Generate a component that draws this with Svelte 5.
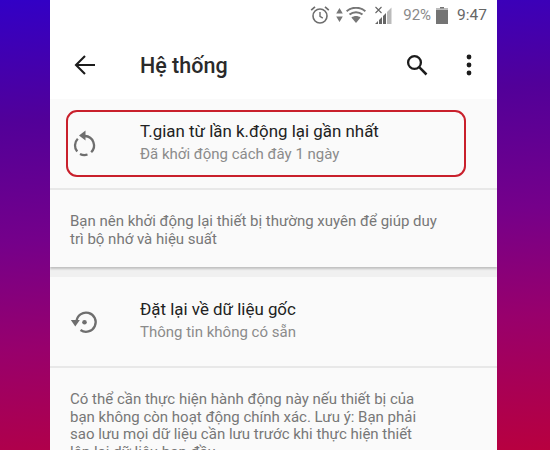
<script lang="ts">
  // Android "Hệ thống" settings page shown on a gradient backdrop
  const restartNote = "Bạn nên khởi động lại thiết bị thường xuyên để giúp duy trì bộ nhớ và hiệu suất";
  const resetNote =
    "Có thể cần thực hiện hành động này nếu thiết bị của bạn không còn hoạt động chính xác. Lưu ý: Bạn phải sao lưu mọi dữ liệu cần lưu trước khi thực hiện thiết lập\u00a0lại dữ liệu ban đầu.";
</script>

<div class="backdrop">
  <main class="phone">
    <header class="appbar">
      <div class="status">
        <svg class="alarm" viewBox="0 0 20 20" width="20" height="20" aria-hidden="true">
          <circle cx="10" cy="11" r="7" fill="none" stroke="#6d6d6d" stroke-width="1.6" />
          <path d="M10 7v4.400l2.800 1.700" fill="none" stroke="#6d6d6d" stroke-width="1.400" />
          <path d="M1.200 5.200 5 1.900M18.800 5.200 15 1.900" fill="none" stroke="#6d6d6d" stroke-width="1.700" />
        </svg>
        <svg class="updown" viewBox="0 0 7 14" width="7" height="14" aria-hidden="true">
          <path d="M3.500 0 6.800 5.600H.2zM3.500 14 .2 8.400h6.600z" fill="#777" />
        </svg>
        <svg class="wifi" viewBox="0 0 20 16" width="20" height="16" aria-hidden="true">
          <path d="M.6 4.200c5.400-4.600 13.400-4.600 18.800 0" fill="none" stroke="#777" stroke-width="2" />
          <path d="M3.500 7.600c3.800-3.200 9.200-3.200 13 0" fill="none" stroke="#777" stroke-width="2" />
          <path d="M10 16 5.400 10.400c2.800-2 6.400-2 9.200 0z" fill="#777" />
        </svg>
        <svg class="signal" viewBox="0 0 17 18" width="17" height="18" aria-hidden="true">
          <path d="M.5 1 6.500 7M6.500 1 .5 7" stroke="#666" stroke-width="1.100" fill="none" />
          <path d="M0 18 3 15V18zM4 18V14L7 11V18zM8 18V10L11 7V18z" fill="#666" />
          <path d="M12 18V6L16.500 1.500V18z" fill="#bbb" />
        </svg>
        <span class="percent">92%</span>
        <svg class="battery" viewBox="0 0 12 17" width="12" height="17" aria-hidden="true">
          <path d="M4 0h4v1.500h4V17H0V1.500h4z" fill="#747474" />
          <rect y="1.500" width="12" height="1.500" fill="#bdbdbd" />
        </svg>
        <span class="clock">9:47</span>
      </div>
      <div class="toolbar">
        <svg class="back" viewBox="0 0 24 24" width="24" height="24" aria-hidden="true">
          <path d="M22 12H3.600M12 3 3 12l9 9" fill="none" stroke="#1c1c1c" stroke-width="2.100" />
        </svg>
        <h1>Hệ thống</h1>
        <svg class="search" viewBox="0 0 24 24" width="24" height="24" aria-hidden="true">
          <circle cx="9.500" cy="9.500" r="6.400" fill="none" stroke="#1c1c1c" stroke-width="2.300" />
          <path d="m14.200 14.200 7.300 7.300" stroke="#1c1c1c" stroke-width="2.500" />
        </svg>
        <svg class="more" viewBox="0 0 6 22" width="6" height="22" aria-hidden="true">
          <circle cx="3" cy="3" r="2.400" fill="#1c1c1c" />
          <circle cx="3" cy="11" r="2.400" fill="#1c1c1c" />
          <circle cx="3" cy="19" r="2.400" fill="#1c1c1c" />
        </svg>
      </div>
    </header>

    <section class="card first">
      <div class="row">
        <svg class="row-icon" viewBox="0 0 30 30" width="30" height="30" aria-hidden="true">
          <path
            d="M15 6A9.500 9.500 0 0 1 21.200 22.200M17.500 24.500A9.500 9.500 0 0 1 10 23.900M7.200 21.600A9.500 9.500 0 0 1 7.800 8.800"
            fill="none"
            stroke="#6e6e6e"
            stroke-width="2.300"
          />
          <path d="M15.500 .5V10.500L9 5.500z" fill="#6e6e6e" />
        </svg>
        <div class="row-text">
          <div class="title">T.gian từ lần k.động lại gần nhất</div>
          <div class="sub">Đã khởi động cách đây 1 ngày</div>
        </div>
      </div>
      <div class="divider"></div>
      <p class="note">{restartNote}</p>
      <div class="highlight"></div>
    </section>

    <div class="gap"></div>

    <section class="card">
      <div class="row reset">
        <svg class="row-icon" viewBox="0 0 30 30" width="30" height="30" aria-hidden="true">
          <path d="M6.500 14.500A9.600 9.600 0 1 1 10.500 23" fill="none" stroke="#6e6e6e" stroke-width="2.300" />
          <path d="M.8 13H9.800L5.300 19.500z" fill="#6e6e6e" />
          <circle cx="14.500" cy="15.200" r="2.300" fill="#6e6e6e" />
        </svg>
        <div class="row-text">
          <div class="title">Đặt lại về dữ liệu gốc</div>
          <div class="sub">Thông tin không có sẵn</div>
        </div>
      </div>
      <div class="divider"></div>
      <p class="note">{resetNote}</p>
    </section>
  </main>
</div>

<style>
  :global(body) {
    margin: 0;
  }
  .backdrop {
    display: flex;
    justify-content: center;
    box-sizing: border-box;
    width: 550px;
    height: 450px;
    overflow: hidden;
    padding-right: 3px;
    background: linear-gradient(176deg, #3200c6 0%, #520099 25%, #75008a 50%, #98006c 72%, #b8003f 100%);
    font-family: Roboto, "Noto Sans", sans-serif;
  }
  .phone {
    width: 447px;
    height: 450px;
    overflow: hidden;
    background: #fafafa;
  }
  .appbar {
    position: relative;
    height: 99px;
    background: #fff;
    box-shadow: 0 1px 2px rgba(0, 0, 0, 0.25);
  }
  .status {
    display: flex;
    justify-content: flex-end;
    align-items: center;
    height: 30px;
    padding-right: 10px;
    color: #6f6f6f;
  }
  .alarm {
    margin-right: 6px;
  }
  .updown {
    margin-right: 3px;
  }
  .wifi {
    margin-right: 9px;
  }
  .signal {
    margin-right: 11px;
  }
  .percent {
    margin-right: 5px;
    font-size: 15px;
    color: #8a8a8a;
  }
  .battery {
    margin-right: 9px;
  }
  .clock {
    font-size: 15.500px;
    color: #666;
  }
  .toolbar {
    display: flex;
    align-items: center;
    height: 69px;
    padding-right: 25px;
    padding-left: 23px;
  }
  .toolbar h1 {
    flex: 1;
    margin: 2px 0 0 43px;
    font-size: 21.500px;
    font-weight: 500;
    color: #2a2a2a;
  }
  .search {
    margin-right: 37px;
  }
  .card {
    position: relative;
    background: #fafafa;
  }
  .first {
    height: 168px;
    box-sizing: border-box;
    padding-top: 3px;
    box-shadow: 0 1.500px 2px rgba(0, 0, 0, 0.2);
  }
  .row {
    display: flex;
    align-items: center;
    height: 86px;
    padding-left: 20px;
  }
  .row.reset {
    height: 89px;
  }
  .row-icon {
    margin-right: 40px;
  }
  .row-text {
    margin-bottom: 4px;
  }
  .reset .row-text {
    margin-bottom: 1px;
  }
  .title {
    font-size: 16.900px;
    line-height: 23px;
    color: #222;
  }
  .sub {
    font-size: 15px;
    line-height: 23px;
    color: #8b8b8b;
  }
  .divider {
    height: 2px;
    background: #e8e8e8;
  }
  .note {
    margin: 0;
    padding: 23px 60px 0 20px;
    font-size: 15px;
    line-height: 17.500px;
    color: #777;
  }
  .gap {
    height: 10px;
    background: #f0f0f0;
  }
  .highlight {
    position: absolute;
    top: 11px;
    left: 16px;
    width: 400px;
    height: 67px;
    box-sizing: border-box;
    border: 2px solid #c9202c;
    border-radius: 11px;
  }
</style>
